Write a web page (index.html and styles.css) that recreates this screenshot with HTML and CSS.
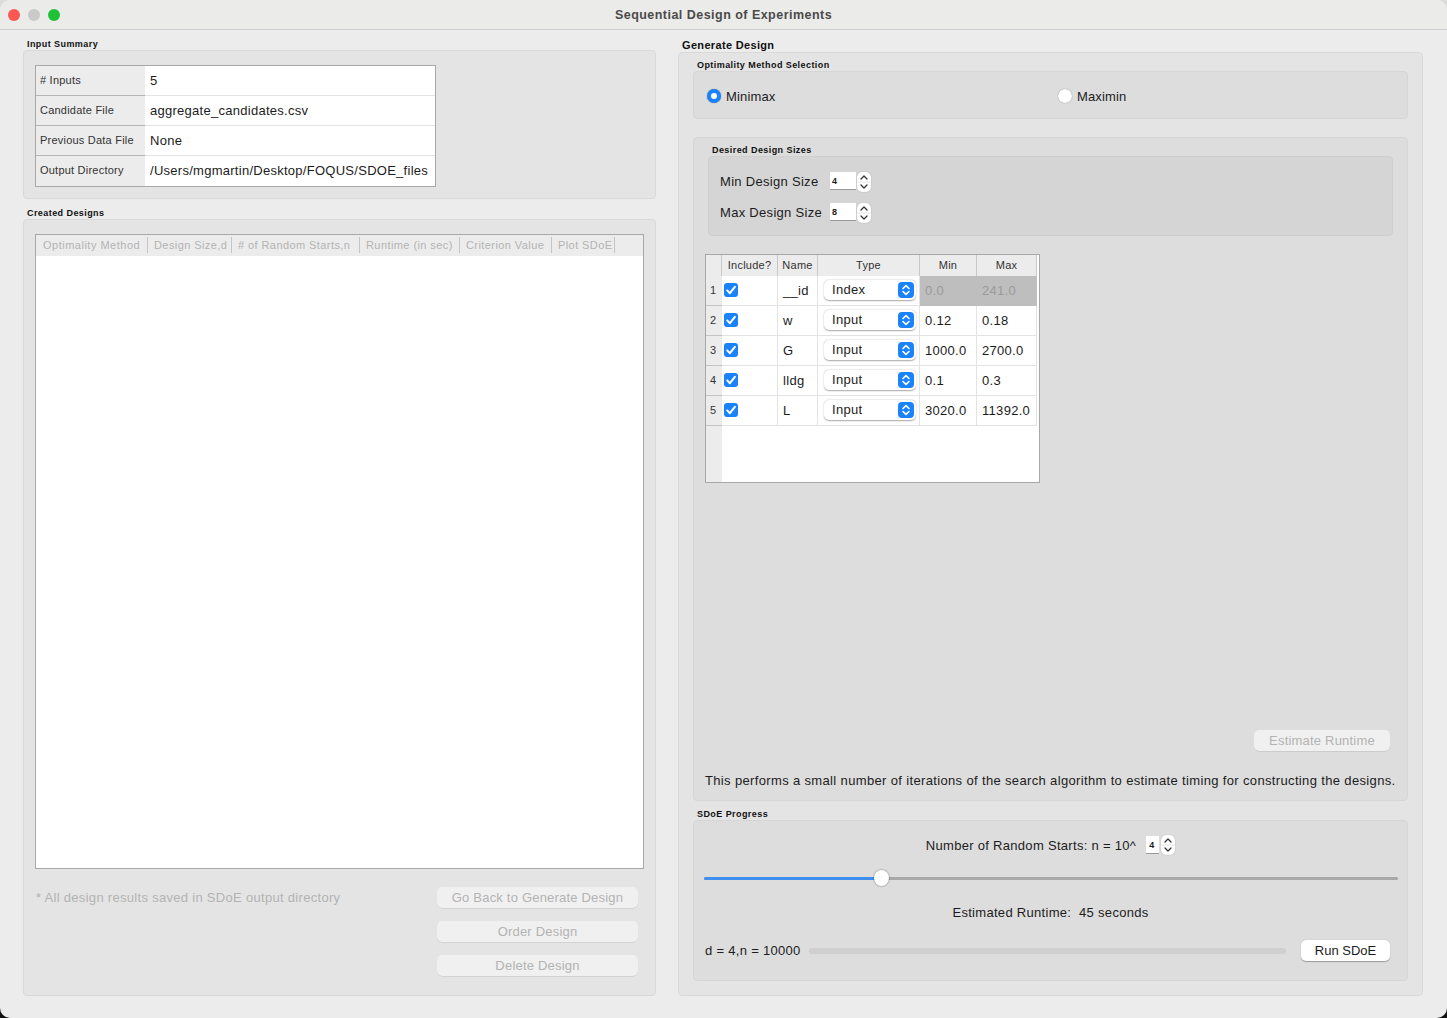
FILE: index.html
```html
<!DOCTYPE html>
<html lang="en">
  <head>
    <meta charset="UTF-8" />
    <title>Sequential Design of Experiments</title>
    <link rel="stylesheet" href="styles.css">
  </head>
  <body>
    <svg class="defs" width="0" height="0">
      <symbol id="updown" viewBox="0 0 16 16">
        <path d="M5 6.5 8 3.6l3 2.9M5 9.5l3 2.9 3-2.9" fill="none" stroke="#fff" stroke-width="1.6" stroke-linecap="round" stroke-linejoin="round" />
      </symbol>
      <symbol id="check" viewBox="0 0 14 14">
        <path d="M3.2 7.4 5.9 10.2 10.9 3.9" fill="none" stroke="#fff" stroke-width="2" stroke-linecap="round" stroke-linejoin="round" />
      </symbol>
      <symbol id="stepper" viewBox="0 0 14 20">
        <path d="M0 10h14" stroke="#e4e4e4" />
        <path d="M4 7 7 4l3 3M4 13l3 3 3-3" fill="none" stroke="#333" stroke-width="1.3" stroke-linecap="round" stroke-linejoin="round" />
      </symbol>
    </svg>

    <div class="window">
      <div class="titlebar">
        <div class="lights">
          <span class="light red"></span>
          <span class="light grey"></span>
          <span class="light green"></span>
        </div>
        <div class="title">Sequential Design of Experiments</div>
      </div>

      <div class="main">
        <div class="col-left">
          <div class="small-label">Input Summary</div>
          <div class="panel summary-panel">
            <table class="summary">
              <tr><th>#&nbsp;Inputs</th><td>5</td></tr>
              <tr><th>Candidate File</th><td>aggregate_candidates.csv</td></tr>
              <tr><th>Previous Data File</th><td>None</td></tr>
              <tr><th>Output Directory</th><td>/Users/mgmartin/Desktop/FOQUS/SDOE_files</td></tr>
            </table>
          </div>

          <div class="small-label created-label">Created Designs</div>
          <div class="panel created-panel">
            <div class="designs">
              <div class="designs-head">
                <span class="dh-1">Optimality Method</span>
                <span class="dh-2">Design Size,d</span>
                <span class="dh-3"># of Random Starts,n</span>
                <span class="dh-4">Runtime (in sec)</span>
                <span class="dh-5">Criterion Value</span>
                <span class="dh-6">Plot SDoE</span>
              </div>
            </div>
            <div class="designs-foot">
              <div class="note">* All design results saved in SDoE output directory</div>
              <div class="foot-btns">
                <button class="btn disabled">Go Back to Generate Design</button>
                <button class="btn disabled">Order Design</button>
                <button class="btn disabled">Delete Design</button>
              </div>
            </div>
          </div>
        </div>

        <div class="col-right">
          <div class="big-label">Generate Design</div>
          <div class="panel generate">
            <div class="small-label optimality-label">Optimality Method Selection</div>
            <div class="panel level2 optimality">
              <label class="radio-item"><span class="radio on"></span>Minimax</label>
              <label class="radio-item"><span class="radio"></span>Maximin</label>
            </div>

            <div class="panel level2 sizes">
              <div class="small-label sizes-label">Desired Design Sizes</div>
              <div class="panel level3 sizes-box">
                <div class="size-row">
                  <span class="size-name">Min Design Size</span>
                  <span class="spin">4</span>
                  <svg class="stepper" width="14" height="20"><use href="#stepper" /></svg>
                </div>
                <div class="size-row">
                  <span class="size-name">Max Design Size</span>
                  <span class="spin">8</span>
                  <svg class="stepper" width="14" height="20"><use href="#stepper" /></svg>
                </div>
              </div>

              <div class="vars-box">
                <table class="vars">
                  <colgroup>
                    <col class="c-idx" /><col class="c-inc" /><col class="c-name" /><col class="c-type" /><col class="c-min" /><col class="c-max" />
                  </colgroup>
                  <tr class="vars-head">
                    <th></th><th>Include?</th><th>Name</th><th>Type</th><th>Min</th><th>Max</th>
                  </tr>
                  <tr>
                    <th class="idx">1</th>
                    <td class="inc"><span class="check"><svg width="14" height="14"><use href="#check" /></svg></span></td>
                    <td>__id</td>
                    <td class="type"><div class="select">Index<span class="select-arrow"><svg width="16" height="16"><use href="#updown" /></svg></span></div></td>
                    <td class="locked">0.0</td>
                    <td class="locked">241.0</td>
                  </tr>
                  <tr>
                    <th class="idx">2</th>
                    <td class="inc"><span class="check"><svg width="14" height="14"><use href="#check" /></svg></span></td>
                    <td>w</td>
                    <td class="type"><div class="select">Input<span class="select-arrow"><svg width="16" height="16"><use href="#updown" /></svg></span></div></td>
                    <td>0.12</td>
                    <td>0.18</td>
                  </tr>
                  <tr>
                    <th class="idx">3</th>
                    <td class="inc"><span class="check"><svg width="14" height="14"><use href="#check" /></svg></span></td>
                    <td>G</td>
                    <td class="type"><div class="select">Input<span class="select-arrow"><svg width="16" height="16"><use href="#updown" /></svg></span></div></td>
                    <td>1000.0</td>
                    <td>2700.0</td>
                  </tr>
                  <tr>
                    <th class="idx">4</th>
                    <td class="inc"><span class="check"><svg width="14" height="14"><use href="#check" /></svg></span></td>
                    <td>lldg</td>
                    <td class="type"><div class="select">Input<span class="select-arrow"><svg width="16" height="16"><use href="#updown" /></svg></span></div></td>
                    <td>0.1</td>
                    <td>0.3</td>
                  </tr>
                  <tr>
                    <th class="idx">5</th>
                    <td class="inc"><span class="check"><svg width="14" height="14"><use href="#check" /></svg></span></td>
                    <td>L</td>
                    <td class="type"><div class="select">Input<span class="select-arrow"><svg width="16" height="16"><use href="#updown" /></svg></span></div></td>
                    <td>3020.0</td>
                    <td>11392.0</td>
                  </tr>
                </table>
              </div>

              <button class="btn disabled estimate">Estimate Runtime</button>
              <p class="estimate-text">This performs a small number of iterations of the search algorithm to estimate timing for constructing the designs.</p>
            </div>

            <div class="small-label progress-label">SDoE Progress</div>
            <div class="panel level2 progress-panel">
              <div class="starts-row">
                <span>Number of Random Starts: n = 10^</span>
                <span class="spin spin-small">4</span>
                <svg class="stepper" width="14" height="20"><use href="#stepper" /></svg>
              </div>
              <div class="slider">
                <div class="slider-fill"></div>
                <div class="slider-knob"></div>
              </div>
              <div class="runtime">Estimated Runtime:&nbsp; 45 seconds</div>
              <div class="run-row">
                <span class="run-info">d = 4,n = 10000</span>
                <div class="progress-bar"></div>
                <button class="btn run">Run SDoE</button>
              </div>
            </div>
          </div>
        </div>
      </div>
    </div>
  </body>
</html>
```

FILE: styles.css
```css
:root {
  --window: #ececec;
  --level1: #e4e4e4;
  --level2: #dddddd;
  --level3: #d5d5d5;
  --line: #d9d9d9;
  --table-line: #a8a8a8;
  --cell-line: #e3e3e3;
  --head: #ececec;
  --text: #1c1c1c;
  --text-off: #b3b3b3;
  --blue: #1a82fb;
}

* {
  margin: 0;
  padding: 0;
  box-sizing: border-box;
}

html,
body {
  width: 1447px;
  height: 1018px;
  overflow: hidden;
}

body {
  font-family: "Liberation Sans", Arial, sans-serif;
  font-size: 13px;
  letter-spacing: 0.3px;
  color: var(--text);
  background: linear-gradient(#dcdcdc 50%, #111 50%);
}

.defs {
  position: absolute;
}

.window {
  width: 100%;
  height: 100%;
  display: flex;
  flex-direction: column;
  border-radius: 10px;
  background: var(--window);
  overflow: hidden;
}

.titlebar {
  position: relative;
  flex: none;
  height: 30px;
  display: flex;
  align-items: center;
  justify-content: center;
  border-bottom: 1px solid #cfcfcf;
  background: #ebebe9;
}

.title {
  font-size: 12.5px;
  font-weight: 700;
  letter-spacing: 0.47px;
  color: #4a4a4a;
}

.lights {
  position: absolute;
  left: 8px;
  top: 9px;
  display: flex;
  gap: 8px;
}

.light {
  width: 12px;
  height: 12px;
  border-radius: 50%;
}

.red {
  background: #fc5753;
}

.grey {
  background: #c9c9c9;
}

.green {
  background: #1fc136;
}

.main {
  flex: 1;
  min-height: 0;
  display: flex;
  gap: 22px;
  padding: 8px 24px 22px 23px;
}

.col-left {
  width: 633px;
  display: flex;
  flex-direction: column;
}

.col-right {
  width: 745px;
  display: flex;
  flex-direction: column;
}

.small-label {
  height: 12px;
  line-height: 12px;
  padding-left: 4px;
  font-size: 9px;
  font-weight: 700;
  letter-spacing: 0.43px;
  color: #111;
}

.big-label {
  height: 13px;
  margin-top: 1px;
  padding-left: 4px;
  line-height: 13px;
  font-size: 11px;
  font-weight: 700;
  letter-spacing: 0.33px;
  color: #111;
}

.panel {
  border: 1px solid var(--line);
  border-radius: 4px;
  background: var(--level1);
}

.level2 {
  background: var(--level2);
  border-color: #d6d6d6;
}

.level3 {
  background: var(--level3);
  border-color: #cfcfcf;
}

/* input summary */
.summary-panel {
  height: 149px;
  padding: 14px 0 0 11px;
}

.summary {
  width: 401px;
  height: 122px;
  table-layout: fixed;
  border-collapse: separate;
  border-spacing: 0;
  border: 1px solid var(--table-line);
  background: #fff;
}

.summary th {
  width: 109px;
  height: 30px;
  padding: 0 0 2px 4px;
  text-align: left;
  font-size: 11px;
  font-weight: 400;
  letter-spacing: 0.22px;
  color: #333;
  background: #ececec;
  border-bottom: 1px solid #b5b5b5;
}

.summary td {
  height: 30px;
  padding: 0 0 1px 5px;
  font-size: 13px;
  letter-spacing: 0.27px;
  white-space: nowrap;
  border-bottom: 1px solid var(--cell-line);
}

.summary tr:last-child th,
.summary tr:last-child td {
  border-bottom: none;
}

/* created designs */
.created-label {
  margin-top: 8px;
}

.created-panel {
  flex: 1;
  padding: 14px 17px 0 11px;
}

.designs {
  width: 609px;
  height: 635px;
  border: 1px solid var(--table-line);
  background: #fff;
}

.designs-head {
  height: 21px;
  padding-bottom: 1px;
  display: flex;
  align-items: center;
  background: var(--head);
  color: var(--text-off);
  font-size: 11px;
  letter-spacing: 0.42px;
}

.designs-head span {
  height: 16px;
  line-height: 16px;
  padding-left: 6px;
  border-right: 1px solid #c4c4c4;
  white-space: nowrap;
  overflow: hidden;
}

.designs-head .dh-1 {
  padding-left: 7px;
  letter-spacing: 0.5px;
}

.dh-1 { width: 112px; }
.dh-2 { width: 84px; }
.dh-3 { width: 128px; }
.dh-4 { width: 100px; }
.dh-5 { width: 92px; }
.dh-6 { width: 63px; }

.designs-foot {
  display: flex;
  justify-content: space-between;
  margin-top: 18px;
}

.note {
  padding-left: 1px;
  line-height: 21px;
  color: var(--text-off);
}

.foot-btns {
  width: 201px;
  display: flex;
  flex-direction: column;
  gap: 13px;
}

.btn {
  height: 21px;
  border: none;
  border-radius: 5px;
  background: #fff;
  box-shadow: 0 0.5px 1px rgba(0, 0, 0, 0.3);
  font-family: inherit;
  font-size: 13px;
  color: var(--text);
}

.btn.disabled {
  background: #f0f0f0;
  color: var(--text-off);
  letter-spacing: 0.2px;
  box-shadow: 0 0.5px 0.5px rgba(0, 0, 0, 0.15);
}

/* generate design */
.generate {
  flex: 1;
  display: flex;
  flex-direction: column;
  padding: 6px 14px 14px 14px;
}

.optimality {
  flex: none;
  height: 48px;
  padding-top: 2px;
  display: flex;
  align-items: center;
}

.radio-item {
  display: flex;
  align-items: center;
  gap: 5px;
  width: 351px;
  padding-left: 13px;
  letter-spacing: 0.15px;
}

.radio {
  width: 14px;
  height: 14px;
  border-radius: 50%;
  background: #fff;
  box-shadow: 0 0 1px rgba(0, 0, 0, 0.5);
}

.radio.on {
  border: 4px solid var(--blue);
}

.sizes {
  flex: 1;
  margin-top: 18px;
  display: flex;
  flex-direction: column;
  padding: 6px 0 11px;
}

.sizes-label {
  padding-left: 18px;
}

.sizes-box {
  flex: none;
  height: 80px;
  margin: 0 14px;
  padding: 15px 0 0 11px;
  display: flex;
  flex-direction: column;
  gap: 11px;
}

.size-row {
  height: 20px;
  display: flex;
  align-items: flex-start;
}

.size-name {
  width: 110px;
  line-height: 20px;
}

.spin {
  width: 26px;
  height: 18px;
  margin-right: 1px;
  padding-left: 2px;
  line-height: 18px;
  font-size: 9px;
  font-weight: 700;
  letter-spacing: 0;
  background: #fff;
  border-bottom: 1px solid #999;
}

.stepper {
  flex: none;
  border-radius: 5px;
  background: #fff;
  box-shadow: 0 0 1px rgba(0, 0, 0, 0.35);
}

.vars-box {
  width: 335px;
  height: 229px;
  margin: 18px 0 0 11px;
  border: 1px solid var(--table-line);
  background: linear-gradient(to right, #ececec 16px, #fff 16px);
}

.vars {
  table-layout: fixed;
  width: 331px;
  border-collapse: separate;
  border-spacing: 0;
}

.c-idx { width: 16px; }
.c-inc { width: 56px; }
.c-name { width: 40px; }
.c-type { width: 102px; }
.c-min { width: 57px; }
.c-max { width: 60px; }

.vars-head th {
  height: 21px;
  padding: 0 0 1px;
  font-size: 11px;
  font-weight: 400;
  letter-spacing: 0.25px;
  color: #333;
  background: var(--head);
  border-right: 1px solid #c8c8c8;
}

.vars td {
  height: 30px;
  padding-left: 5px;
  white-space: nowrap;
  border-right: 1px solid var(--cell-line);
  border-bottom: 1px solid var(--cell-line);
  background: #fff;
}

.vars .inc {
  padding-left: 2px;
}

.vars .type {
  padding-left: 6px;
}

.vars .idx {
  padding: 0 0 2px 4px;
  text-align: left;
  font-size: 11px;
  font-weight: 400;
  color: #333;
  background: #ececec;
  border-bottom: 1px solid #c4c4c4;
}

.vars .locked {
  background: #bebebe;
  color: #9a9a9a;
  border-color: #bebebe;
}

.check {
  display: block;
  width: 14px;
  height: 14px;
  margin-bottom: 2px;
  border-radius: 3px;
  background: var(--blue);
}

.check svg {
  display: block;
}

.select {
  width: 92px;
  height: 20px;
  margin-bottom: 2px;
  display: flex;
  align-items: center;
  justify-content: space-between;
  padding: 0 2px 0 8px;
  border-radius: 5px;
  background: #fff;
  box-shadow: 0 0.5px 1.5px rgba(0, 0, 0, 0.35);
}

.select-arrow {
  width: 16px;
  height: 16px;
  border-radius: 4px;
  background: var(--blue);
}

.select-arrow svg {
  display: block;
}

.estimate {
  flex: none;
  align-self: flex-end;
  width: 136px;
  margin: auto 17px 22px 0;
}

.estimate-text {
  padding-left: 11px;
  line-height: 16px;
  letter-spacing: 0.35px;
  white-space: nowrap;
}

.progress-label {
  margin-top: 7px;
}

.progress-panel {
  flex: none;
  height: 161px;
  display: flex;
  flex-direction: column;
}

.starts-row {
  height: 20px;
  margin-top: 14px;
  display: flex;
  align-items: center;
  justify-content: center;
}

.spin-small {
  width: 13px;
  margin-left: 10px;
  padding-left: 3px;
}

.starts-row .stepper {
  margin-left: 1px;
}

.slider {
  position: relative;
  height: 3px;
  margin: 22px 9px 0 10px;
  border-radius: 2px;
  background: #a8a8a8;
}

.slider-fill {
  width: 172px;
  height: 100%;
  border-radius: 2px;
  background: #3f8ff0;
}

.slider-knob {
  position: absolute;
  left: 170px;
  top: -7px;
  width: 15px;
  height: 16px;
  border-radius: 50%;
  background: #fff;
  box-shadow: 0 0 2px rgba(0, 0, 0, 0.5);
}

.runtime {
  margin-top: 25px;
  line-height: 16px;
  text-align: center;
}

.run-row {
  height: 20px;
  margin-top: 19px;
  padding: 0 17px 0 11px;
  display: flex;
  align-items: center;
}

.run-info {
  width: 104px;
  white-space: nowrap;
}

.progress-bar {
  width: 477px;
  height: 6px;
  margin-top: 1px;
  border-radius: 3px;
  background: #cfcfcf;
}

.run {
  width: 89px;
  height: 21px;
  margin-left: auto;
  letter-spacing: 0;
}
```
